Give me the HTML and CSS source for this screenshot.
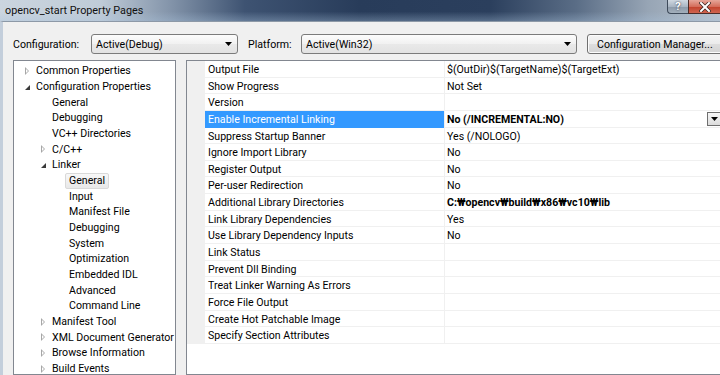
FILE: index.html
```html
<!DOCTYPE html>
<html lang="en">
<head>
    <meta charset="UTF-8">
    <title>opencv_start Property Pages</title>
    <link rel="stylesheet" href="styles.css">
</head>
<body>
    <div class="window">
        <!-- Caption bar -->
        <div class="titlebar">
            <span class="title">opencv_start Property Pages</span>
            <div class="caption-buttons">
                <span class="cap-btn help">?</span>
                <span class="cap-btn close">
                    <svg width="12" height="10" viewBox="0 0 12 10"><path d="M2 1 L10 9 M10 1 L2 9" stroke="#3a2622" stroke-width="3.4" stroke-linecap="square"/><path d="M2 1 L10 9 M10 1 L2 9" stroke="#fff" stroke-width="2" stroke-linecap="square"/></svg>
                </span>
            </div>
        </div>

        <div class="client">
            <!-- Configuration / platform selectors -->
            <div class="config-row">
                <span class="config-label">Configuration:</span>
                <div class="combo combo-config">
                    <span>Active(Debug)</span>
                    <svg class="combo-arrow" width="7" height="4" viewBox="0 0 7 4"><polygon points="0,0 7,0 3.5,4" fill="#000"/></svg>
                </div>
                <span class="platform-label">Platform:</span>
                <div class="combo combo-platform">
                    <span>Active(Win32)</span>
                    <svg class="combo-arrow" width="7" height="4" viewBox="0 0 7 4"><polygon points="0,0 7,0 3.5,4" fill="#000"/></svg>
                </div>
                <button class="btn">Configuration Manager...</button>
            </div>

            <div class="panels">
                <!-- Category tree -->
                <ul class="tree">
                    <li class="tree-item"><span class="expander closed"></span><span class="label">Common Properties</span></li>
                    <li class="tree-item"><span class="expander open"></span><span class="label">Configuration Properties</span></li>
                    <li class="tree-item l1"><span class="expander"></span><span class="label">General</span></li>
                    <li class="tree-item l1"><span class="expander"></span><span class="label">Debugging</span></li>
                    <li class="tree-item l1"><span class="expander"></span><span class="label">VC++ Directories</span></li>
                    <li class="tree-item l1"><span class="expander closed"></span><span class="label">C/C++</span></li>
                    <li class="tree-item l1"><span class="expander open"></span><span class="label">Linker</span></li>
                    <li class="tree-item l2"><span class="expander"></span><span class="label selected">General</span></li>
                    <li class="tree-item l2"><span class="expander"></span><span class="label">Input</span></li>
                    <li class="tree-item l2"><span class="expander"></span><span class="label">Manifest File</span></li>
                    <li class="tree-item l2"><span class="expander"></span><span class="label">Debugging</span></li>
                    <li class="tree-item l2"><span class="expander"></span><span class="label">System</span></li>
                    <li class="tree-item l2"><span class="expander"></span><span class="label">Optimization</span></li>
                    <li class="tree-item l2"><span class="expander"></span><span class="label">Embedded IDL</span></li>
                    <li class="tree-item l2"><span class="expander"></span><span class="label">Advanced</span></li>
                    <li class="tree-item l2"><span class="expander"></span><span class="label">Command Line</span></li>
                    <li class="tree-item l1"><span class="expander closed"></span><span class="label">Manifest Tool</span></li>
                    <li class="tree-item l1"><span class="expander closed"></span><span class="label">XML Document Generator</span></li>
                    <li class="tree-item l1"><span class="expander closed"></span><span class="label">Browse Information</span></li>
                    <li class="tree-item l1"><span class="expander closed"></span><span class="label">Build Events</span></li>
                </ul>

                <!-- Property grid -->
                <div class="grid">
                    <div class="grid-row"><div class="gutter"></div><div class="name">Output File</div><div class="value">$(OutDir)$(TargetName)$(TargetExt)</div></div>
                    <div class="grid-row"><div class="gutter"></div><div class="name">Show Progress</div><div class="value">Not Set</div></div>
                    <div class="grid-row"><div class="gutter"></div><div class="name">Version</div><div class="value"></div></div>
                    <div class="grid-row active"><div class="gutter"></div><div class="name">Enable Incremental Linking</div><div class="value bold"><span>No (/INCREMENTAL:NO)</span><span class="drop-btn"><svg width="7" height="4" viewBox="0 0 7 4"><polygon points="0,0 7,0 3.5,4" fill="#000"/></svg></span></div></div>
                    <div class="grid-row"><div class="gutter"></div><div class="name">Suppress Startup Banner</div><div class="value">Yes (/NOLOGO)</div></div>
                    <div class="grid-row"><div class="gutter"></div><div class="name">Ignore Import Library</div><div class="value">No</div></div>
                    <div class="grid-row"><div class="gutter"></div><div class="name">Register Output</div><div class="value">No</div></div>
                    <div class="grid-row"><div class="gutter"></div><div class="name">Per-user Redirection</div><div class="value">No</div></div>
                    <div class="grid-row"><div class="gutter"></div><div class="name">Additional Library Directories</div><div class="value bold">C:₩opencv₩build₩x86₩vc10₩lib</div></div>
                    <div class="grid-row"><div class="gutter"></div><div class="name">Link Library Dependencies</div><div class="value">Yes</div></div>
                    <div class="grid-row"><div class="gutter"></div><div class="name">Use Library Dependency Inputs</div><div class="value">No</div></div>
                    <div class="grid-row"><div class="gutter"></div><div class="name">Link Status</div><div class="value"></div></div>
                    <div class="grid-row"><div class="gutter"></div><div class="name">Prevent Dll Binding</div><div class="value"></div></div>
                    <div class="grid-row"><div class="gutter"></div><div class="name">Treat Linker Warning As Errors</div><div class="value"></div></div>
                    <div class="grid-row"><div class="gutter"></div><div class="name">Force File Output</div><div class="value"></div></div>
                    <div class="grid-row"><div class="gutter"></div><div class="name">Create Hot Patchable Image</div><div class="value"></div></div>
                    <div class="grid-row"><div class="gutter"></div><div class="name">Specify Section Attributes</div><div class="value"></div></div>
                </div>
            </div>
        </div>
    </div>
</body>
</html>
```

FILE: styles.css
```css
* {
    box-sizing: border-box;
}

body {
    margin: 0;
    width: 720px;
    height: 375px;
    overflow: hidden;
    font-family: Roboto, "Noto Sans CJK KR", sans-serif;
    font-size: 10.6px;
    color: #000;
    background-color: #f0f0f0;
}

.window {
    display: flex;
    flex-direction: column;
    height: 375px;
}

/* Aero caption bar */
.titlebar {
    flex: none;
    height: 21px;
    display: flex;
    justify-content: space-between;
    align-items: flex-start;
    background:
        linear-gradient(to bottom, rgba(255, 255, 255, 0) 55%, rgba(170, 195, 220, 0.35) 100%),
        linear-gradient(to right, #cbd5df 0%, #bfcbd7 14%, #8192a8 24%, #3e5372 34%, #283c5a 50%, #2b3f5d 68%, #5a6d86 80%, #97a5b5 90%, #b8c2cd 100%);
}

.title {
    padding: 3px 0 0 5px;
    line-height: 16px;
    font-size: 10.8px;
    color: #101010;
}

.caption-buttons {
    display: flex;
}

.cap-btn {
    height: 14px;
    display: flex;
    align-items: center;
    justify-content: center;
}

.help {
    width: 21px;
    border: 1px solid #3e4a5a;
    border-top: none;
    border-right: none;
    border-radius: 0 0 0 4px;
    background: linear-gradient(to bottom, #d0d8e1, #aab6c3 50%, #8c99a8 51%, #a3afbc);
    color: #fff;
    font-weight: bold;
    font-size: 11px;
    line-height: 12px;
    text-shadow: 0 0 2px #223;
}

.close {
    width: 32px;
    border: 1px solid #4b2c28;
    border-top: none;
    border-right: none;
    background: linear-gradient(to bottom, #e6a699, #d46e5c 50%, #c2412b 51%, #cf6450);
}

/* Dialog body */
.client {
    flex: 1;
    min-height: 0;
    display: flex;
    flex-direction: column;
    border-left: 3px solid #c3cedb;
    border-top: 1px solid #8d99a7;
    padding: 12px 0 0 10px;
}

.config-row {
    display: flex;
    align-items: center;
    height: 20px;
    white-space: nowrap;
}

.config-row > * {
    flex: none;
}

.config-label {
    width: 78px;
}

.platform-label {
    width: 53px;
    margin-left: 10px;
}

.combo {
    height: 20px;
    display: flex;
    align-items: center;
    justify-content: space-between;
    padding: 0 5px 0 4px;
    border: 1px solid #7b7b7b;
    border-radius: 3px;
    background: linear-gradient(to bottom, #fcfcfc, #f1f1f1 50%, #e9e9e9 51%, #e2e2e2);
}

.combo-config {
    width: 147px;
}

.combo-platform {
    width: 276px;
}

.btn {
    width: 140px;
    height: 20px;
    margin-left: 10px;
    padding: 0 0 0 9px;
    text-align: left;
    font-family: inherit;
    font-size: 10.6px;
    color: #000;
    border: 1px solid #707070;
    border-radius: 3px;
    background: linear-gradient(to bottom, #f4f4f4, #ebebeb 50%, #dddddd 51%, #d3d3d3);
    box-shadow: inset 0 0 0 1px #fcfcfc;
}

.panels {
    flex: 1;
    min-height: 0;
    display: flex;
    margin-top: 6px;
}

/* Category tree */
.tree {
    flex: none;
    width: 163px;
    margin: 0;
    padding: 2px 0 0 10px;
    list-style: none;
    overflow: hidden;
    border: 1px solid #828790;
    background-color: #fff;
}

.tree-item {
    display: flex;
    align-items: center;
    height: 15.68px;
    white-space: nowrap;
}

.tree-item.l1 {
    padding-left: 16px;
}

.tree-item.l2 {
    padding-left: 33px;
}

.expander {
    flex: none;
    width: 12px;
    height: 8px;
    position: relative;
}

.expander.closed::before {
    content: '';
    position: absolute;
    left: 1px;
    top: 0;
    border-style: solid;
    border-width: 4px 0 4px 4px;
    border-color: transparent transparent transparent #a7a7a7;
}

.expander.closed::after {
    content: '';
    position: absolute;
    left: 2px;
    top: 2px;
    border-style: solid;
    border-width: 2px 0 2px 2px;
    border-color: transparent transparent transparent #fff;
}

.expander.open::before {
    content: '';
    position: absolute;
    left: 1px;
    top: 2px;
    border-style: solid;
    border-width: 0 0 5px 5px;
    border-color: transparent transparent #3a3a3a transparent;
}

.label.selected {
    margin-left: -4px;
    padding: 0 3px;
    line-height: 14px;
    border: 1px solid #d9d9d9;
    border-radius: 2px;
    background: linear-gradient(to bottom, #f8f8f8, #e8e8e8);
}

/* Property grid */
.grid {
    flex: none;
    width: 536px;
    margin-left: 10px;
    border: 1px solid #828790;
    border-right: none;
    background-color: #fff;
}

.grid-row {
    display: flex;
    height: 16.65px;
    white-space: nowrap;
}

.gutter {
    flex: none;
    width: 18px;
    background-color: #f0f0f0;
}

.name,
.value {
    border-bottom: 1px solid #f0f0f0;
    padding-top: 3px;
    line-height: 12.65px;
}

.name {
    flex: none;
    width: 239px;
    padding-left: 3px;
}

.value {
    flex: 1;
    display: flex;
    justify-content: space-between;
    align-items: center;
    padding-left: 2px;
    border-left: 1px solid #f0f0f0;
}

.value.bold {
    font-weight: bold;
}

.grid-row.active .name {
    background-color: #3399ff;
    border-bottom-color: #3399ff;
    color: #fff;
}

.drop-btn {
    width: 15px;
    height: 14px;
    margin-top: -2px;
    display: flex;
    align-items: center;
    justify-content: center;
    border: 1px solid #6f6f6f;
    background: linear-gradient(to bottom, #f6f6f6, #dcdcdc);
}
```
